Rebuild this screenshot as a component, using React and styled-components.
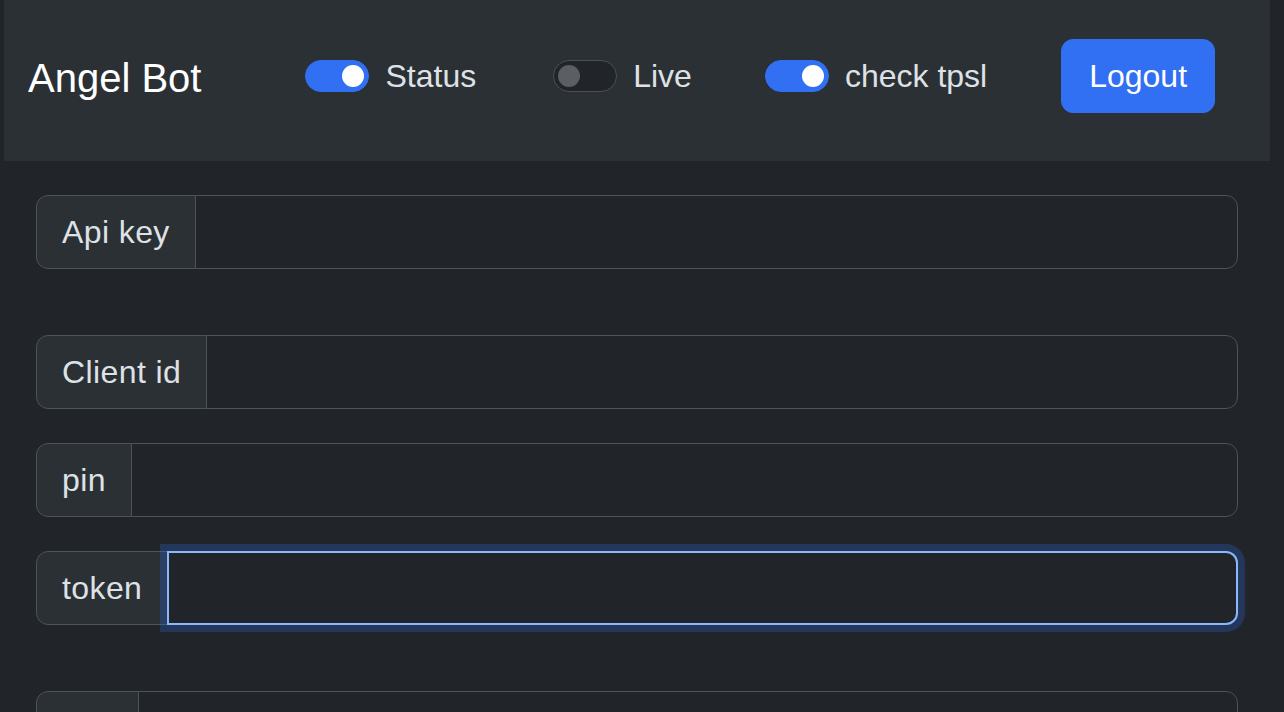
import React, { useState } from 'react';
import styled, { createGlobalStyle } from 'styled-components';

const GlobalStyle = createGlobalStyle`
  html, body {
    margin: 0;
    padding: 0;
    background: #212529;
    overflow: hidden;
  }
  body {
    font-family: 'Liberation Sans', Arial, sans-serif;
    color: #dee2e6;
  }
`;

const Page = styled.div`
  width: 1284px;
  height: 712px;
  overflow: hidden;
  background: #212529;
`;

const Navbar = styled.nav`
  display: flex;
  align-items: center;
  height: 161px;
  margin: 0 14px 0 4px;
  padding: 0 24px 10px;
  box-sizing: border-box;
  background: #2b3035;
`;

const Brand = styled.span`
  font-size: 40px;
  line-height: 1;
  color: #fff;
  margin-top: 4px;
  margin-right: 104px;
`;

const SwitchGroup = styled.label`
  display: flex;
  align-items: center;
  gap: 16px;
  margin-right: ${(p) => p.$gap}px;
  font-size: 32px;
  line-height: 48px;
  color: #dee2e6;
  cursor: pointer;
`;

const Track = styled.span`
  position: relative;
  display: inline-block;
  width: 64px;
  height: 32px;
  box-sizing: border-box;
  border-radius: 16px;
  border: 1px solid ${(p) => (p.$on ? '#316ff3' : '#4a4f55')};
  background: ${(p) => (p.$on ? '#316ff3' : '#212529')};

  &::after {
    content: '';
    position: absolute;
    top: 4px;
    left: ${(p) => (p.$on ? '36px' : '4px')};
    width: 22px;
    height: 22px;
    border-radius: 50%;
    background: ${(p) => (p.$on ? '#fff' : '#5b5f64')};
  }
`;

const LogoutButton = styled.button`
  font-family: inherit;
  font-size: 32px;
  line-height: 48px;
  color: #fff;
  background: #316ff3;
  border: 1px solid #316ff3;
  border-radius: 12px;
  padding: 12px 27px;
  cursor: pointer;
`;

const Form = styled.div`
  display: flex;
  flex-direction: column;
  padding: 34px 46px 0 36px;
`;

const InputGroup = styled.div`
  display: flex;
  height: 74px;
  margin-bottom: ${(p) => (p.$wide ? 66 : 34)}px;
`;

const GroupLabel = styled.span`
  display: flex;
  align-items: center;
  padding: 0 25px 0 25px;
  font-size: 32px;
  letter-spacing: 0.4px;
  color: #dee2e6;
  background: #2b3035;
  border: 1px solid #4d5358;
  border-radius: 12px 0 0 12px;
`;

const Field = styled.input`
  flex: 1;
  min-width: 0;
  margin-left: -1px;
  font-family: inherit;
  font-size: 32px;
  color: #dee2e6;
  background: #212529;
  border: ${(p) => (p.$focused ? '2px solid #8ab8fe' : '1px solid #4d5358')};
  border-radius: 0 12px 12px 0;
  padding: 0 24px;
  outline: none;
  box-shadow: ${(p) => (p.$focused ? '0 0 0 7px rgba(49, 111, 243, 0.25)' : 'none')};
  position: relative;
  z-index: ${(p) => (p.$focused ? 2 : 0)};
`;

const fields = [
  { label: 'Api key', wide: true },
  { label: 'Client id' },
  { label: 'pin' },
  { label: 'token', focused: true, wide: true },
  { label: 'lots' },
];

export default function App() {
  const [status, setStatus] = useState(true);
  const [live, setLive] = useState(false);
  const [tpsl, setTpsl] = useState(true);

  return (
    <Page>
      <GlobalStyle />
      <Navbar>
        <Brand>Angel Bot</Brand>
        <SwitchGroup $gap={77} onClick={() => setStatus(!status)}>
          <Track $on={status} />
          Status
        </SwitchGroup>
        <SwitchGroup $gap={73} onClick={() => setLive(!live)}>
          <Track $on={live} />
          Live
        </SwitchGroup>
        <SwitchGroup $gap={74} onClick={() => setTpsl(!tpsl)}>
          <Track $on={tpsl} />
          check tpsl
        </SwitchGroup>
        <LogoutButton>Logout</LogoutButton>
      </Navbar>
      <Form>
        {fields.map((f) => (
          <InputGroup key={f.label} $wide={f.wide}>
            <GroupLabel>{f.label}</GroupLabel>
            <Field $focused={f.focused} />
          </InputGroup>
        ))}
      </Form>
    </Page>
  );
}
